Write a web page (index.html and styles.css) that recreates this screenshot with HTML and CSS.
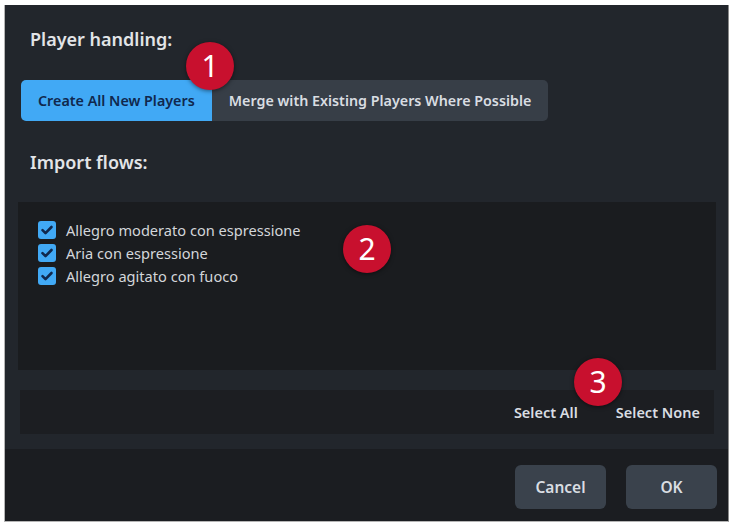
FILE: index.html
```html
<!DOCTYPE html>
<html lang="en">
<head>
    <meta charset="UTF-8">
    <meta name="viewport" content="width=device-width, initial-scale=1.0">
    <title>Import Flows</title>
    <link rel="stylesheet" href="styles.css">
</head>
<body>
    <div class="dialog">
        <div class="content">
            <h2 class="heading">Player handling:</h2>
            <div class="segmented">
                <button class="seg active">Create All New Players</button>
                <button class="seg">Merge with Existing Players Where Possible</button>
            </div>

            <h2 class="heading flows-heading">Import flows:</h2>
            <ul class="flow-list">
                <li class="flow"><span class="check"><svg viewBox="0 0 18 18"><path d="M4.5 9.2l3 3 6-6.2" /></svg></span>Allegro moderato con espressione</li>
                <li class="flow"><span class="check"><svg viewBox="0 0 18 18"><path d="M4.5 9.2l3 3 6-6.2" /></svg></span>Aria con espressione</li>
                <li class="flow"><span class="check"><svg viewBox="0 0 18 18"><path d="M4.5 9.2l3 3 6-6.2" /></svg></span>Allegro agitato con fuoco</li>
            </ul>

            <div class="select-bar">
                <button class="link-btn">Select All</button>
                <button class="link-btn">Select None</button>
            </div>
        </div>

        <div class="footer">
            <button class="btn">Cancel</button>
            <button class="btn">OK</button>
        </div>

        <!-- callout numbers -->
        <span class="badge badge-1">1</span>
        <span class="badge badge-2">2</span>
        <span class="badge badge-3">3</span>
    </div>
</body>
</html>
```

FILE: styles.css
```css
body {
    margin: 0;
    background-color: #fff;
    font-family: "Noto Sans", "Open Sans", sans-serif;
}

.dialog {
    position: relative;
    box-sizing: border-box;
    width: 725px;
    height: 517px;
    margin: 5px 0 0 4px;
    background-color: #22262c;
    border-left: 1px solid #b5b5b5;
    border-right: 1px solid #8a8a8a;
    border-bottom: 1px solid #b5b5b5;
    display: flex;
    flex-direction: column;
}

.content {
    flex: 1;
    padding: 22px 12px 0 13px;
}

.heading {
    margin: 0 0 0 12px;
    font-size: 18px;
    line-height: 24px;
    font-weight: 600;
    color: #e2e4e7;
}

.segmented {
    display: flex;
    margin: 29px 0 0 3px;
}

button {
    font-family: inherit;
    border: none;
    cursor: pointer;
}

.seg {
    height: 41px;
    padding: 0 17px;
    font-size: 14.3px;
    font-weight: 600;
    background-color: #373e47;
    color: #d9dde2;
}

.seg:first-child {
    border-radius: 5px 0 0 5px;
}

.seg:last-child {
    border-radius: 0 5px 5px 0;
}

.seg.active {
    background-color: #41a9f5;
    color: #10284d;
}

.flows-heading {
    margin-top: 29px;
}

.flow-list {
    list-style: none;
    margin: 28px 0 0 0;
    padding: 16px 20px;
    height: 136px;
    background-color: #1a1c1f;
}

.flow {
    display: flex;
    align-items: center;
    gap: 10px;
    height: 23px;
    font-size: 14.6px;
    color: #d3d6da;
}

.check {
    width: 18px;
    height: 18px;
    border-radius: 3px;
    background-color: #41a9f5;
}

.check svg {
    display: block;
    width: 18px;
    height: 18px;
    fill: none;
    stroke: #10284d;
    stroke-width: 2.6;
    stroke-linecap: round;
    stroke-linejoin: round;
}

.select-bar {
    display: flex;
    justify-content: flex-end;
    align-items: center;
    gap: 38px;
    height: 44px;
    margin: 20px 2px 0 2px;
    padding: 0 14px;
    background-color: #1c1e22;
}

.link-btn {
    background: none;
    padding: 0;
    font-size: 14.5px;
    font-weight: 600;
    color: #d9dde2;
}

.footer {
    display: flex;
    justify-content: flex-end;
    gap: 20px;
    height: 72px;
    padding: 16px 11px 0 0;
    box-sizing: border-box;
    background-color: #1b1d21;
}

.btn {
    width: 91px;
    height: 44px;
    border-radius: 6px;
    background-color: #3a424c;
    color: #d9dde2;
    font-size: 15.5px;
    font-weight: 600;
}

.badge {
    position: absolute;
    width: 48px;
    height: 48px;
    border-radius: 50%;
    background-color: #c8102e;
    color: #fff;
    font-size: 30px;
    line-height: 48px;
    text-align: center;
    box-shadow: 0 1px 4px rgba(0, 0, 0, 0.5);
}

.badge-1 {
    left: 181px;
    top: 37px;
}

.badge-2 {
    left: 338px;
    top: 220px;
}

.badge-3 {
    left: 569px;
    top: 353px;
}
```
